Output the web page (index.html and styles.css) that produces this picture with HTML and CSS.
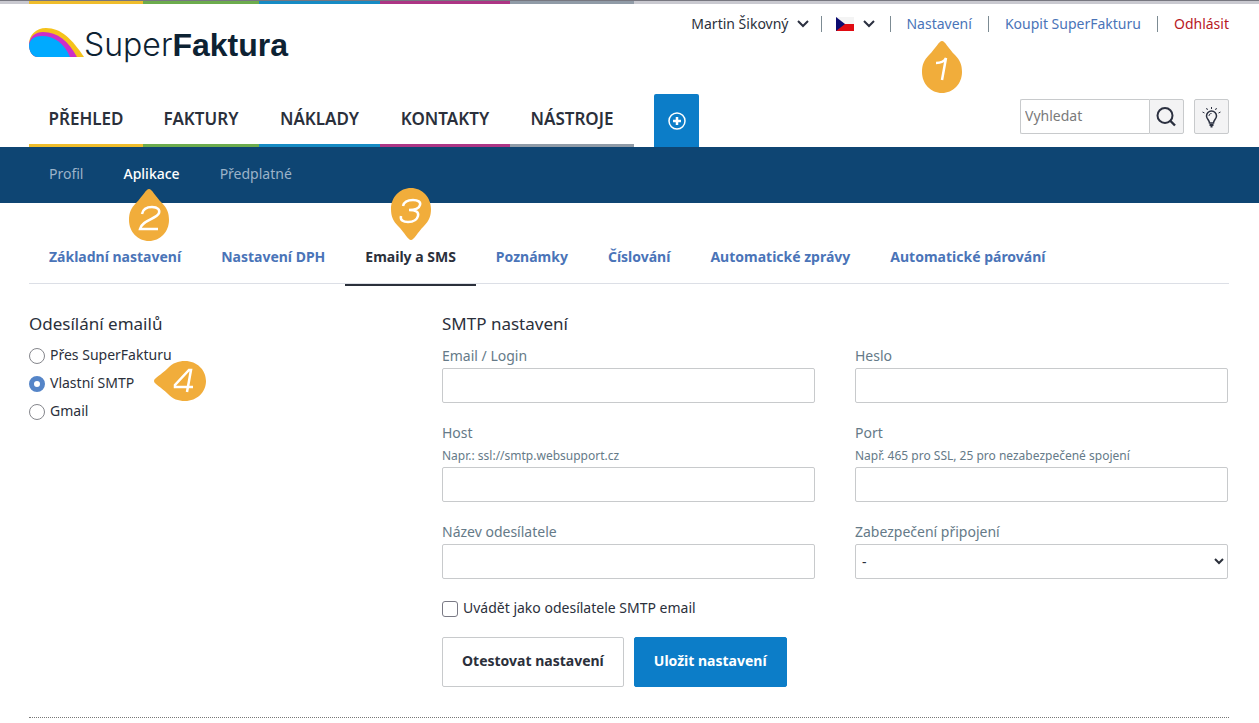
FILE: index.html
```html
<!DOCTYPE html>
<html lang="cs">
<head>
<meta charset="utf-8">
<meta name="viewport" content="width=device-width, initial-scale=1">
<title>SuperFaktura</title>
<link rel="stylesheet" href="styles.css">
</head>
<body>
<div class="strip module-columns" aria-hidden="true">
  <span class="yellow"></span><span class="green"></span><span class="blue"></span><span class="pink"></span><span class="gray"></span>
</div>
<header class="header">
  <div class="header-top">
    <a class="logo" href="#">
      <svg class="logo-mark" viewBox="0 0 55 30" width="55" height="30" aria-hidden="true">
        <path fill="#f5c21b" d="M0 16C0 7 7 0 17 0c15 0 26 11 38 29H9C3 29 0 23 0 16z"/>
        <path fill="#cc2fc9" d="M0 16C1 8 7 4 14 4c15 0 25 9 34 25H9C3 29 0 23 0 16z"/>
        <path fill="#0af" d="M0 17C1 11 6 8 13 8c12 0 22 7 28 21H9C3 29 0 23 0 17z"/>
      </svg>
      <span class="logo-text"><span class="logo-light">Super</span><b class="logo-bold">Faktura</b></span>
    </a>
    <nav class="account" aria-label="Účet">
      <button class="plain" type="button">Martin Šikovný
        <svg class="chevron" viewBox="0 0 12 8" width="12" height="8" aria-hidden="true"><path d="M1 1l5 5 5-5"/></svg>
      </button>
      <button class="plain" type="button" aria-label="Čeština">
        <svg viewBox="0 0 18 14" width="18" height="14" aria-hidden="true"><path fill="#f4f4f4" d="M0 0h18v7H0z"/><path fill="#e00b12" d="M0 7h18v7H0z"/><path fill="#0b0b70" d="M0 0l9 7-9 7z"/></svg>
        <svg class="chevron" viewBox="0 0 12 8" width="12" height="8" aria-hidden="true"><path d="M1 1l5 5 5-5"/></svg>
      </button>
      <a class="anchor" href="#">Nastavení
        <svg class="marker marker-below" viewBox="0 0 42 52" width="42" height="52" aria-hidden="true"><path fill="#f1ad3b" d="M21 0c3 0 6 7 13 14 5 5 7 10 7 17 0 12-9 21-20 21S1 43 1 31c0-7 2-12 7-17 7-7 10-14 13-14z"/><path class="digit" d="M15 22c5 0 8-1 10-5l-4 22"/></svg>
      </a>
      <a href="#">Koupit SuperFakturu</a>
      <a class="logout" href="#">Odhlásit</a>
    </nav>
  </div>
  <div class="header-main">
    <nav class="modules module-columns" aria-label="Hlavní menu">
      <a class="yellow" href="#">PŘEHLED</a>
      <a class="green" href="#">FAKTURY</a>
      <a class="blue" href="#">NÁKLADY</a>
      <a class="pink" href="#">KONTAKTY</a>
      <a class="gray" href="#">NÁSTROJE</a>
    </nav>
    <button class="add" type="button" aria-label="Přidat">
      <svg viewBox="0 0 18 18" width="18" height="18" aria-hidden="true"><circle cx="9" cy="9" r="8" fill="none" stroke="#fff" stroke-width="1.5"/><path d="M9 5v8M5 9h8" stroke="#fff" stroke-width="2.5"/></svg>
    </button>
    <form class="search" role="search">
      <input class="search-input" type="search" placeholder="Vyhledat" aria-label="Vyhledat">
      <button class="search-button" type="button" aria-label="Hledat">
        <svg viewBox="0 0 22 22" width="22" height="22" fill="none" stroke="#2b3040" stroke-width="2" aria-hidden="true"><circle cx="9" cy="9.500" r="7.500"/><path d="M14 14.500l5 5" stroke-width="2.400"/></svg>
      </button>
    </form>
    <button class="tips" type="button" aria-label="Tipy">
      <svg viewBox="0 0 20 22" width="20" height="22" fill="none" stroke="#2b3040" stroke-width="1.500" aria-hidden="true"><path d="M7.500 17c0-3-3-4-3-7a5 5 0 0 1 10 0c0 3-3 4-3 7z"/><path d="M7 10c0-1.500 1-2.500 2.500-2.500" stroke-width="1"/><path d="M7.500 19h4M8.500 20.500h2" stroke-width="2"/><path d="M9.500 3V1M5.500 4l-1-2M13.500 4l1-2M2.500 7l-2-1M16.500 7l2-1" stroke-width="1"/></svg>
    </button>
  </div>
</header>
<nav class="subnav" aria-label="Nastavení">
  <a href="#">Profil</a>
  <a class="current anchor" href="#" aria-current="page">Aplikace
    <svg class="marker marker-below" viewBox="0 0 42 52" width="42" height="52" aria-hidden="true"><path fill="#f1ad3b" d="M21 0c3 0 6 7 13 14 5 5 7 10 7 17 0 12-9 21-20 21S1 43 1 31c0-7 2-12 7-17 7-7 10-14 13-14z"/><path class="digit" d="M14 25c1-5 5-7 10-7 6 0 8 3 7 6-2 6-17 7-19 16h18"/></svg>
  </a>
  <a href="#">Předplatné</a>
</nav>
<main class="content">
  <nav class="tabs" aria-label="Nastavení aplikace">
    <a href="#">Základní nastavení</a>
    <a href="#">Nastavení DPH</a>
    <a class="current anchor" href="#" aria-current="page">Emaily a SMS
      <svg class="marker marker-above" viewBox="0 0 42 52" width="42" height="52" aria-hidden="true"><path fill="#f1ad3b" d="M21 52c3 0 6-7 13-14 5-5 7-10 7-17C41 9 32 0 21 0S1 9 1 21c0 7 2 12 7 17 7 7 10 14 13 14z"/><path class="digit" d="M13 18c1-4 5-6 10-6s8 2 7 5c-1 4-5 5-11 5 7 0 10 2 9 6s-5 6-10 6-8-2-7-6"/></svg>
    </a>
    <a href="#">Poznámky</a>
    <a href="#">Číslování</a>
    <a href="#">Automatické zprávy</a>
    <a href="#">Automatické párování</a>
  </nav>
  <form class="settings">
    <fieldset class="group sending">
      <legend class="title">Odesílání emailů</legend>
      <label class="option"><input type="radio" name="sending">Přes SuperFakturu</label>
      <label class="option anchor"><input type="radio" name="sending" checked>Vlastní SMTP
        <svg class="marker marker-right" viewBox="0 0 52 42" width="52" height="42" aria-hidden="true"><path fill="#f1ad3b" d="M0 21c0-3 7-6 14-13 5-5 10-7 17-7 12 0 21 9 21 20s-9 20-21 20c-7 0-12-2-17-7C7 27 0 24 0 21z"/><path class="digit" d="M33 32l4-22h-2L21 25v2h18"/></svg>
      </label>
      <label class="option"><input type="radio" name="sending">Gmail</label>
    </fieldset>
    <fieldset class="group smtp">
      <legend class="title">SMTP nastavení</legend>
      <div class="fields">
        <div class="field"><label for="login">Email / Login</label><input class="control" id="login" type="text"></div>
        <div class="field"><label for="password">Heslo</label><input class="control" id="password" type="password"></div>
        <div class="field"><label for="host">Host</label><small id="host-hint">Napr.: ssl://smtp.websupport.cz</small><input class="control" id="host" type="text" aria-describedby="host-hint"></div>
        <div class="field"><label for="port">Port</label><small id="port-hint">Např. 465 pro SSL, 25 pro nezabezpečené spojení</small><input class="control" id="port" type="text" aria-describedby="port-hint"></div>
        <div class="field"><label for="sender">Název odesílatele</label><input class="control" id="sender" type="text"></div>
        <div class="field"><label for="security">Zabezpečení připojení</label><select class="control" id="security"><option>-</option></select></div>
      </div>
      <label class="option check"><input type="checkbox">Uvádět jako odesílatele SMTP email</label>
      <div class="actions">
        <button class="button" type="button">Otestovat nastavení</button>
        <button class="button primary" type="button">Uložit nastavení</button>
      </div>
    </fieldset>
  </form>
</main>
</body>
</html>
```
FILE: styles.css
```css
* { box-sizing: border-box; }

body {
  margin: 0;
  background: #fff;
  color: #2b303b;
  font: 14px/24px "Noto Sans", "Open Sans", sans-serif;
}

a { color: #4a74b8; text-decoration: none; }
button, input, select { font: inherit; color: inherit; }
button { cursor: pointer; }

.module-columns {
  display: grid;
  grid-template-columns: 114px 116px 121px 130px 124px;
}

.yellow { --accent: #efbd2c; }
.green { --accent: #6cac4d; }
.blue { --accent: #168bc4; }
.pink { --accent: #ad3585; }
.gray { --accent: #909ba7; }

.strip {
  height: 4px;
  padding: 0 29px;
  border-top: 1px solid #777780;
  background: #c9c9d0;
}
.strip span { background: var(--accent); }

.header { padding: 0 30px 0 29px; }
.header-top {
  display: flex;
  justify-content: space-between;
  align-items: flex-start;
  height: 90px;
  padding-top: 8px;
}

.logo { display: flex; align-items: flex-start; padding-top: 16px; color: #0d2233; }
.logo-text { font-size: 32px; line-height: 32px; }
.logo-light { font-family: Inter, "Liberation Sans", sans-serif; font-weight: 300; }
.logo-bold { font-family: "Liberation Sans", Arial, sans-serif; font-weight: 700; }

.account { display: flex; align-items: center; }
.account > * { display: flex; align-items: center; }
.account > * + *::before { content: ""; width: 1px; height: 16px; margin: 0 16px; background: #7c8b93; }
.account > button + button::before { margin: 0 14px 0 12px; }
.account > button + a::before { margin: 0 15px; }
.plain { padding: 0; border: 0; background: none; }
.plain .chevron { margin-left: 9px; }
.chevron { fill: none; stroke: #2b3040; stroke-width: 2; }
.account .logout { color: #b8191f; }

.header-main { display: flex; align-items: flex-end; }
.modules { height: 53px; }
.modules a {
  display: flex;
  align-items: center;
  justify-content: center;
  border-bottom: 3px solid var(--accent);
  color: #2b303b;
  font-size: 17px;
  font-weight: 600;
}
.add {
  display: grid;
  place-items: center;
  width: 45px;
  height: 53px;
  margin-left: 20px;
  padding: 0;
  border: 0;
  border-radius: 2px 2px 0 0;
  background: #0c7dc8;
}
.search { display: flex; width: 164px; height: 35px; margin: 0 10px 13px auto; }
.search-input {
  flex: 1;
  min-width: 0;
  padding: 0 4px 2px;
  border: 1px solid #c8cacc;
  border-right: 0;
  border-radius: 2px 0 0 2px;
}
.search-input::placeholder { color: #7a7a7a; }
.search-button, .tips {
  display: grid;
  place-items: center;
  width: 35px;
  height: 35px;
  padding: 0;
  border: 1px solid #c8cacc;
  background: #f3f3f4;
}
.search-button { border-radius: 0 2px 2px 0; }
.tips { margin-bottom: 13px; border-radius: 2px; }

.subnav {
  display: flex;
  align-items: center;
  gap: 40px;
  height: 56px;
  padding: 0 49px 2px;
  background: #0e4573;
}
.subnav a { color: #9cb3c9; }
.subnav .current { color: #fff; font-weight: 500; }

.content { margin: 0 30px 0 29px; border-bottom: 1px dotted #777; padding-bottom: 30px; }
.tabs { display: flex; padding-top: 42px; border-bottom: 1px solid #dcdfe6; }
.tabs a { margin-bottom: -3px; padding: 0 20px 15px; border-bottom: 2px solid transparent; font-weight: 700; }
.tabs .current { border-color: #2b303b; color: #2b303b; }

.settings {
  display: grid;
  grid-template-columns: repeat(3, 1fr);
  column-gap: 40px;
  padding: 28px 1px 0 0;
}
.group { min-width: 0; margin: 0; padding: 0; border: 0; }
.smtp { grid-column: span 2; }
.title { margin-bottom: 8px; padding: 0; font-size: 17px; line-height: 24px; }
.sending .title { margin-bottom: 5px; }

.option { display: flex; align-items: center; gap: 5px; width: fit-content; height: 28px; }
.option input { width: 16px; height: 16px; margin: 2px 0 0; }
.option input[type="radio"] { appearance: none; border: 1px solid #85868c; border-radius: 50%; background: #fff; }
.option input[type="radio"]:checked { border: 5px solid #5585c8; }
.option input[type="checkbox"] { appearance: none; border: 1px solid #7a7a85; border-radius: 3px; }
.option input[type="checkbox"]:checked { background: #5585c8; }

.fields { display: grid; grid-template-columns: 1fr 1fr; gap: 18px 40px; }
.field { display: flex; flex-direction: column; color: #657a88; }
.field small { font-size: 12px; line-height: 22px; }
.control {
  width: 100%;
  height: 35px;
  padding: 0 8px;
  border: 1px solid #c8cacc;
  border-radius: 2px;
  background: #fff;
  color: #2b303b;
}
select.control { padding: 0 3px 0 2px; }
.check { margin: 15px 0; }

.actions { display: flex; gap: 10px; }
.button {
  height: 50px;
  padding: 0 19px 2px;
  border: 1px solid #c8cacc;
  border-radius: 2px;
  background: #fff;
  font-weight: 700;
}
.primary { border-color: #0c7dc8; background: #0c7dc8; color: #fff; }

.anchor { position: relative; }
.marker { position: absolute; z-index: 1; }
.marker-below { top: 27px; left: calc(50% - 24px); }
.account .marker-below { top: 29px; left: calc(50% - 3px); }
.marker-above { bottom: 44px; left: calc(50% - 21px); }
.marker-right { left: calc(100% + 20px); top: -9px; }
.digit { fill: none; stroke: #fff; stroke-width: 2.500; }
```
